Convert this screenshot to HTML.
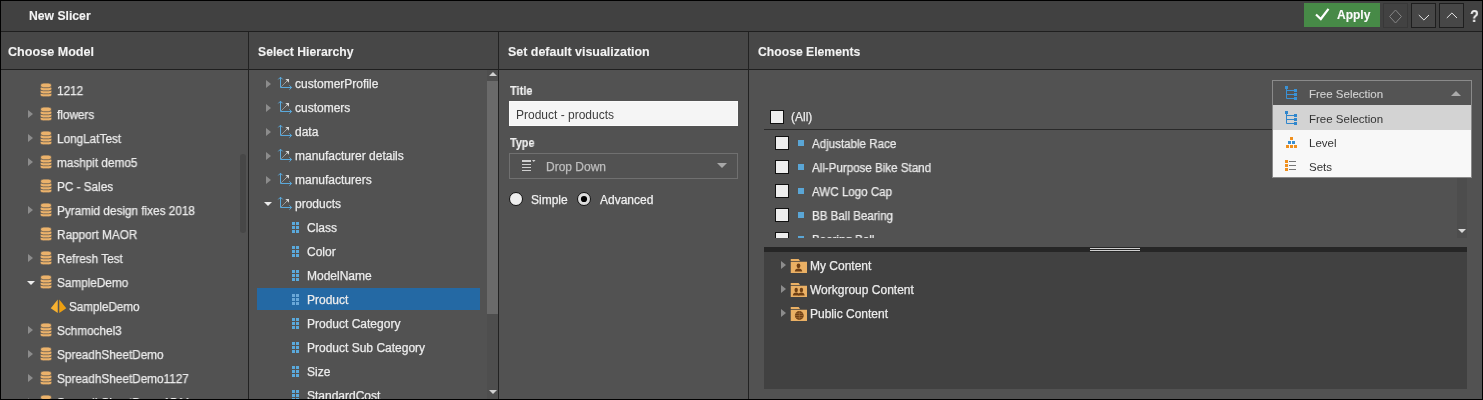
<!DOCTYPE html>
<html><head><meta charset="utf-8">
<style>
*{box-sizing:border-box;margin:0;padding:0}
html,body{width:1483px;height:400px;overflow:hidden;background:#000}
body{position:relative;font-family:"Liberation Sans",sans-serif;font-size:12px;color:#ececec}
.t{-webkit-text-stroke:0.25px currentColor}
.t.b,.t.h{-webkit-text-stroke:0.1px currentColor}
.a{position:absolute}
.t{will-change:transform;position:absolute;line-height:16px;white-space:nowrap;font-size:12px}
.b{font-weight:bold}
.h{font-weight:bold;font-size:12.2px;color:#f2f2f2}
.tri-r{position:absolute;width:0;height:0;border-top:4px solid transparent;border-bottom:4px solid transparent;border-left:5px solid #8c8c8c}
.tri-d{position:absolute;width:0;height:0;border-left:4px solid transparent;border-right:4px solid transparent;border-top:4.5px solid #ececec}
</style></head><body>
<!-- frame -->
<div class="a" style="left:1px;top:1px;width:1481px;height:30px;background:#414141"></div>
<div class="a" style="left:1px;top:31px;width:1481px;height:1px;background:#1f1f1f"></div>
<div class="a" style="left:1px;top:32px;width:1481px;height:37px;background:#474747"></div>
<div class="a" style="left:1px;top:69px;width:1481px;height:1px;background:#1f1f1f"></div>
<div class="a" style="left:1px;top:70px;width:1481px;height:329px;background:#525252"></div>
<div class="a" style="left:248px;top:32px;width:1px;height:367px;background:#222"></div>
<div class="a" style="left:498px;top:32px;width:1px;height:367px;background:#222"></div>
<div class="a" style="left:748px;top:32px;width:1px;height:367px;background:#222"></div>

<!-- title bar -->
<div class="t b" style="left:29px;top:8px;font-size:12.2px;color:#f2f2f2">New Slicer</div>

<!-- column headers -->
<div class="t h" style="left:8px;top:44px;font-size:12.6px">Choose Model</div>
<div class="t h" style="left:258px;top:44px">Select Hierarchy</div>
<div class="t h" style="left:508px;top:44px;font-size:12.45px">Set default visualization</div>
<div class="t h" style="left:758px;top:44px">Choose Elements</div>

<!-- header buttons -->
<div class="a" style="left:1304px;top:3px;width:76px;height:24px;background:#478a47"></div>
<svg class="a" style="left:1314px;top:6.5px" width="17" height="14" viewBox="0 0 17 14"><path d="M2 7.5L6.8 12L14.5 1.8" stroke="#fff" stroke-width="2.2" fill="none"/></svg>
<div class="t b" style="left:1337px;top:7px;color:#fafafa;font-size:12px">Apply</div>
<div class="a" style="left:1383px;top:3px;width:25px;height:25px;background:#424242;border:1px solid #383838"></div>
<svg class="a" style="left:1388px;top:9px" width="15" height="15" viewBox="0 0 15 15"><path d="M7.5 1L13.4 7.5L7.5 14L1.6 7.5Z" stroke="#858585" stroke-width="1" fill="none"/></svg>
<div class="a" style="left:1411px;top:3px;width:25px;height:25px;background:#474747;border:1px solid #1e1e1e"></div>
<svg class="a" style="left:1418px;top:14px" width="12" height="8" viewBox="0 0 12 8"><path d="M0.8 1L5.9 6L11 1" stroke="#e6e6e6" stroke-width="1" fill="none"/></svg>
<div class="a" style="left:1439px;top:3px;width:25px;height:25px;background:#474747;border:1px solid #1e1e1e"></div>
<svg class="a" style="left:1446px;top:12px" width="12" height="8" viewBox="0 0 12 8"><path d="M0.8 6L5.9 1L11 6" stroke="#e6e6e6" stroke-width="1" fill="none"/></svg>
<div class="t b" style="left:1470px;top:9px;color:#f0f0f0;font-size:16px;transform:scaleX(0.9);transform-origin:0 0">?</div>
<svg class="a" style="left:40px;top:83px" width="12" height="14" viewBox="0 0 12 14"><g fill="#ebb26b" stroke="#525252" stroke-width="0.7"><rect x="0.2" y="9.6" width="11.6" height="4.2" rx="3.2" ry="2"/><rect x="0.2" y="6.6" width="11.6" height="4.2" rx="3.2" ry="2"/><rect x="0.2" y="3.4" width="11.6" height="4.4" rx="3.2" ry="2"/><rect x="0.6" y="0.1" width="10.8" height="4.6" rx="3.2" ry="2"/></g></svg>
<div class="t" style="left:56.5px;top:83px;transform:scaleX(0.98);transform-origin:0 0">1212</div>
<div class="tri-r" style="left:28px;top:110px"></div>
<svg class="a" style="left:40px;top:107px" width="12" height="14" viewBox="0 0 12 14"><g fill="#ebb26b" stroke="#525252" stroke-width="0.7"><rect x="0.2" y="9.6" width="11.6" height="4.2" rx="3.2" ry="2"/><rect x="0.2" y="6.6" width="11.6" height="4.2" rx="3.2" ry="2"/><rect x="0.2" y="3.4" width="11.6" height="4.4" rx="3.2" ry="2"/><rect x="0.6" y="0.1" width="10.8" height="4.6" rx="3.2" ry="2"/></g></svg>
<div class="t" style="left:56.5px;top:107px;transform:scaleX(0.98);transform-origin:0 0">flowers</div>
<div class="tri-r" style="left:28px;top:134px"></div>
<svg class="a" style="left:40px;top:131px" width="12" height="14" viewBox="0 0 12 14"><g fill="#ebb26b" stroke="#525252" stroke-width="0.7"><rect x="0.2" y="9.6" width="11.6" height="4.2" rx="3.2" ry="2"/><rect x="0.2" y="6.6" width="11.6" height="4.2" rx="3.2" ry="2"/><rect x="0.2" y="3.4" width="11.6" height="4.4" rx="3.2" ry="2"/><rect x="0.6" y="0.1" width="10.8" height="4.6" rx="3.2" ry="2"/></g></svg>
<div class="t" style="left:56.5px;top:131px;transform:scaleX(0.98);transform-origin:0 0">LongLatTest</div>
<div class="tri-r" style="left:28px;top:158px"></div>
<svg class="a" style="left:40px;top:155px" width="12" height="14" viewBox="0 0 12 14"><g fill="#ebb26b" stroke="#525252" stroke-width="0.7"><rect x="0.2" y="9.6" width="11.6" height="4.2" rx="3.2" ry="2"/><rect x="0.2" y="6.6" width="11.6" height="4.2" rx="3.2" ry="2"/><rect x="0.2" y="3.4" width="11.6" height="4.4" rx="3.2" ry="2"/><rect x="0.6" y="0.1" width="10.8" height="4.6" rx="3.2" ry="2"/></g></svg>
<div class="t" style="left:56.5px;top:155px;transform:scaleX(0.98);transform-origin:0 0">mashpit demo5</div>
<svg class="a" style="left:40px;top:179px" width="12" height="14" viewBox="0 0 12 14"><g fill="#ebb26b" stroke="#525252" stroke-width="0.7"><rect x="0.2" y="9.6" width="11.6" height="4.2" rx="3.2" ry="2"/><rect x="0.2" y="6.6" width="11.6" height="4.2" rx="3.2" ry="2"/><rect x="0.2" y="3.4" width="11.6" height="4.4" rx="3.2" ry="2"/><rect x="0.6" y="0.1" width="10.8" height="4.6" rx="3.2" ry="2"/></g></svg>
<div class="t" style="left:56.5px;top:179px;transform:scaleX(0.98);transform-origin:0 0">PC - Sales</div>
<div class="tri-r" style="left:28px;top:206px"></div>
<svg class="a" style="left:40px;top:203px" width="12" height="14" viewBox="0 0 12 14"><g fill="#ebb26b" stroke="#525252" stroke-width="0.7"><rect x="0.2" y="9.6" width="11.6" height="4.2" rx="3.2" ry="2"/><rect x="0.2" y="6.6" width="11.6" height="4.2" rx="3.2" ry="2"/><rect x="0.2" y="3.4" width="11.6" height="4.4" rx="3.2" ry="2"/><rect x="0.6" y="0.1" width="10.8" height="4.6" rx="3.2" ry="2"/></g></svg>
<div class="t" style="left:56.5px;top:203px;transform:scaleX(0.98);transform-origin:0 0">Pyramid design fixes 2018</div>
<svg class="a" style="left:40px;top:227px" width="12" height="14" viewBox="0 0 12 14"><g fill="#ebb26b" stroke="#525252" stroke-width="0.7"><rect x="0.2" y="9.6" width="11.6" height="4.2" rx="3.2" ry="2"/><rect x="0.2" y="6.6" width="11.6" height="4.2" rx="3.2" ry="2"/><rect x="0.2" y="3.4" width="11.6" height="4.4" rx="3.2" ry="2"/><rect x="0.6" y="0.1" width="10.8" height="4.6" rx="3.2" ry="2"/></g></svg>
<div class="t" style="left:56.5px;top:227px;transform:scaleX(0.98);transform-origin:0 0">Rapport MAOR</div>
<div class="tri-r" style="left:28px;top:254px"></div>
<svg class="a" style="left:40px;top:251px" width="12" height="14" viewBox="0 0 12 14"><g fill="#ebb26b" stroke="#525252" stroke-width="0.7"><rect x="0.2" y="9.6" width="11.6" height="4.2" rx="3.2" ry="2"/><rect x="0.2" y="6.6" width="11.6" height="4.2" rx="3.2" ry="2"/><rect x="0.2" y="3.4" width="11.6" height="4.4" rx="3.2" ry="2"/><rect x="0.6" y="0.1" width="10.8" height="4.6" rx="3.2" ry="2"/></g></svg>
<div class="t" style="left:56.5px;top:251px;transform:scaleX(0.98);transform-origin:0 0">Refresh Test</div>
<div class="tri-d" style="left:26.5px;top:280.5px"></div>
<svg class="a" style="left:40px;top:275px" width="12" height="14" viewBox="0 0 12 14"><g fill="#ebb26b" stroke="#525252" stroke-width="0.7"><rect x="0.2" y="9.6" width="11.6" height="4.2" rx="3.2" ry="2"/><rect x="0.2" y="6.6" width="11.6" height="4.2" rx="3.2" ry="2"/><rect x="0.2" y="3.4" width="11.6" height="4.4" rx="3.2" ry="2"/><rect x="0.6" y="0.1" width="10.8" height="4.6" rx="3.2" ry="2"/></g></svg>
<div class="t" style="left:56.5px;top:275px;transform:scaleX(0.98);transform-origin:0 0">SampleDemo</div>
<svg class="a" style="left:50px;top:299px" width="17" height="15" viewBox="0 0 17 15"><path d="M7.75 0.5L0.75 9.25L7.75 14Z" fill="#f7b130"/><path d="M9.25 0.5L16.25 9.25L9.25 14Z" fill="#eda012"/></svg>
<div class="t" style="left:69px;top:299px;transform:scaleX(0.97);transform-origin:0 0">SampleDemo</div>
<div class="tri-r" style="left:28px;top:326px"></div>
<svg class="a" style="left:40px;top:323px" width="12" height="14" viewBox="0 0 12 14"><g fill="#ebb26b" stroke="#525252" stroke-width="0.7"><rect x="0.2" y="9.6" width="11.6" height="4.2" rx="3.2" ry="2"/><rect x="0.2" y="6.6" width="11.6" height="4.2" rx="3.2" ry="2"/><rect x="0.2" y="3.4" width="11.6" height="4.4" rx="3.2" ry="2"/><rect x="0.6" y="0.1" width="10.8" height="4.6" rx="3.2" ry="2"/></g></svg>
<div class="t" style="left:56.5px;top:323px;transform:scaleX(0.98);transform-origin:0 0">Schmochel3</div>
<div class="tri-r" style="left:28px;top:350px"></div>
<svg class="a" style="left:40px;top:347px" width="12" height="14" viewBox="0 0 12 14"><g fill="#ebb26b" stroke="#525252" stroke-width="0.7"><rect x="0.2" y="9.6" width="11.6" height="4.2" rx="3.2" ry="2"/><rect x="0.2" y="6.6" width="11.6" height="4.2" rx="3.2" ry="2"/><rect x="0.2" y="3.4" width="11.6" height="4.4" rx="3.2" ry="2"/><rect x="0.6" y="0.1" width="10.8" height="4.6" rx="3.2" ry="2"/></g></svg>
<div class="t" style="left:56.5px;top:347px;transform:scaleX(0.98);transform-origin:0 0">SpreadhSheetDemo</div>
<div class="tri-r" style="left:28px;top:374px"></div>
<svg class="a" style="left:40px;top:371px" width="12" height="14" viewBox="0 0 12 14"><g fill="#ebb26b" stroke="#525252" stroke-width="0.7"><rect x="0.2" y="9.6" width="11.6" height="4.2" rx="3.2" ry="2"/><rect x="0.2" y="6.6" width="11.6" height="4.2" rx="3.2" ry="2"/><rect x="0.2" y="3.4" width="11.6" height="4.4" rx="3.2" ry="2"/><rect x="0.6" y="0.1" width="10.8" height="4.6" rx="3.2" ry="2"/></g></svg>
<div class="t" style="left:56.5px;top:371px;transform:scaleX(0.98);transform-origin:0 0">SpreadhSheetDemo1127</div>
<div class="tri-r" style="left:28px;top:398px"></div>
<svg class="a" style="left:40px;top:395px" width="12" height="14" viewBox="0 0 12 14"><g fill="#ebb26b" stroke="#525252" stroke-width="0.7"><rect x="0.2" y="9.6" width="11.6" height="4.2" rx="3.2" ry="2"/><rect x="0.2" y="6.6" width="11.6" height="4.2" rx="3.2" ry="2"/><rect x="0.2" y="3.4" width="11.6" height="4.4" rx="3.2" ry="2"/><rect x="0.6" y="0.1" width="10.8" height="4.6" rx="3.2" ry="2"/></g></svg>
<div class="t" style="left:56.5px;top:395px;transform:scaleX(0.98);transform-origin:0 0">SpreadhSheetDemo1544</div>
<div class="tri-r" style="left:266px;top:79.5px"></div>
<svg class="a" style="left:277px;top:76px" width="16" height="15" viewBox="0 0 16 15"><path d="M3.5 1.2V11.5H14.6" stroke="#5aa9dc" stroke-width="1" fill="none"/><path d="M1.3 3.4L3.5 1.2L5.7 3.4M12.4 9.3L14.6 11.5L12.4 13.7" stroke="#5aa9dc" stroke-width="1" fill="none"/><path d="M4.6 10.4L10.8 4.2" stroke="#d0d0d0" stroke-width="1" stroke-dasharray="1 0.6" fill="none"/><path d="M8.3 3H12V6.7Z" fill="#d8d8d8"/></svg>
<div class="t" style="left:295px;top:76px">customerProfile</div>
<div class="tri-r" style="left:266px;top:103.5px"></div>
<svg class="a" style="left:277px;top:100px" width="16" height="15" viewBox="0 0 16 15"><path d="M3.5 1.2V11.5H14.6" stroke="#5aa9dc" stroke-width="1" fill="none"/><path d="M1.3 3.4L3.5 1.2L5.7 3.4M12.4 9.3L14.6 11.5L12.4 13.7" stroke="#5aa9dc" stroke-width="1" fill="none"/><path d="M4.6 10.4L10.8 4.2" stroke="#d0d0d0" stroke-width="1" stroke-dasharray="1 0.6" fill="none"/><path d="M8.3 3H12V6.7Z" fill="#d8d8d8"/></svg>
<div class="t" style="left:295px;top:100px">customers</div>
<div class="tri-r" style="left:266px;top:127.5px"></div>
<svg class="a" style="left:277px;top:124px" width="16" height="15" viewBox="0 0 16 15"><path d="M3.5 1.2V11.5H14.6" stroke="#5aa9dc" stroke-width="1" fill="none"/><path d="M1.3 3.4L3.5 1.2L5.7 3.4M12.4 9.3L14.6 11.5L12.4 13.7" stroke="#5aa9dc" stroke-width="1" fill="none"/><path d="M4.6 10.4L10.8 4.2" stroke="#d0d0d0" stroke-width="1" stroke-dasharray="1 0.6" fill="none"/><path d="M8.3 3H12V6.7Z" fill="#d8d8d8"/></svg>
<div class="t" style="left:295px;top:124px">data</div>
<div class="tri-r" style="left:266px;top:151.5px"></div>
<svg class="a" style="left:277px;top:148px" width="16" height="15" viewBox="0 0 16 15"><path d="M3.5 1.2V11.5H14.6" stroke="#5aa9dc" stroke-width="1" fill="none"/><path d="M1.3 3.4L3.5 1.2L5.7 3.4M12.4 9.3L14.6 11.5L12.4 13.7" stroke="#5aa9dc" stroke-width="1" fill="none"/><path d="M4.6 10.4L10.8 4.2" stroke="#d0d0d0" stroke-width="1" stroke-dasharray="1 0.6" fill="none"/><path d="M8.3 3H12V6.7Z" fill="#d8d8d8"/></svg>
<div class="t" style="left:295px;top:148px">manufacturer details</div>
<div class="tri-r" style="left:266px;top:175.5px"></div>
<svg class="a" style="left:277px;top:172px" width="16" height="15" viewBox="0 0 16 15"><path d="M3.5 1.2V11.5H14.6" stroke="#5aa9dc" stroke-width="1" fill="none"/><path d="M1.3 3.4L3.5 1.2L5.7 3.4M12.4 9.3L14.6 11.5L12.4 13.7" stroke="#5aa9dc" stroke-width="1" fill="none"/><path d="M4.6 10.4L10.8 4.2" stroke="#d0d0d0" stroke-width="1" stroke-dasharray="1 0.6" fill="none"/><path d="M8.3 3H12V6.7Z" fill="#d8d8d8"/></svg>
<div class="t" style="left:295px;top:172px">manufacturers</div>
<div class="tri-d" style="left:264px;top:201.5px"></div>
<svg class="a" style="left:277px;top:196px" width="16" height="15" viewBox="0 0 16 15"><path d="M3.5 1.2V11.5H14.6" stroke="#5aa9dc" stroke-width="1" fill="none"/><path d="M1.3 3.4L3.5 1.2L5.7 3.4M12.4 9.3L14.6 11.5L12.4 13.7" stroke="#5aa9dc" stroke-width="1" fill="none"/><path d="M4.6 10.4L10.8 4.2" stroke="#d0d0d0" stroke-width="1" stroke-dasharray="1 0.6" fill="none"/><path d="M8.3 3H12V6.7Z" fill="#d8d8d8"/></svg>
<div class="t" style="left:295px;top:196px">products</div>
<svg class="a" style="left:292px;top:222px" width="8" height="11" viewBox="0 0 8 11"><g fill="#5aa9dc"><rect x="0" y="0" width="3" height="3"/><rect x="4" y="0" width="3" height="3"/><rect x="0" y="4" width="3" height="3"/><rect x="4" y="4" width="3" height="3"/><rect x="0" y="8" width="3" height="3"/><rect x="4" y="8" width="3" height="3"/></g></svg>
<div class="t" style="left:306.5px;top:220px">Class</div>
<svg class="a" style="left:292px;top:246px" width="8" height="11" viewBox="0 0 8 11"><g fill="#5aa9dc"><rect x="0" y="0" width="3" height="3"/><rect x="4" y="0" width="3" height="3"/><rect x="0" y="4" width="3" height="3"/><rect x="4" y="4" width="3" height="3"/><rect x="0" y="8" width="3" height="3"/><rect x="4" y="8" width="3" height="3"/></g></svg>
<div class="t" style="left:306.5px;top:244px">Color</div>
<svg class="a" style="left:292px;top:270px" width="8" height="11" viewBox="0 0 8 11"><g fill="#5aa9dc"><rect x="0" y="0" width="3" height="3"/><rect x="4" y="0" width="3" height="3"/><rect x="0" y="4" width="3" height="3"/><rect x="4" y="4" width="3" height="3"/><rect x="0" y="8" width="3" height="3"/><rect x="4" y="8" width="3" height="3"/></g></svg>
<div class="t" style="left:306.5px;top:268px">ModelName</div>
<div class="a" style="left:257px;top:288px;width:223px;height:22px;background:#2469a4"></div>
<svg class="a" style="left:292px;top:294px" width="8" height="11" viewBox="0 0 8 11"><g fill="#6aa8d8"><rect x="0" y="0" width="3" height="3"/><rect x="4" y="0" width="3" height="3"/><rect x="0" y="4" width="3" height="3"/><rect x="4" y="4" width="3" height="3"/><rect x="0" y="8" width="3" height="3"/><rect x="4" y="8" width="3" height="3"/></g></svg>
<div class="t" style="left:306.5px;top:292px">Product</div>
<svg class="a" style="left:292px;top:318px" width="8" height="11" viewBox="0 0 8 11"><g fill="#5aa9dc"><rect x="0" y="0" width="3" height="3"/><rect x="4" y="0" width="3" height="3"/><rect x="0" y="4" width="3" height="3"/><rect x="4" y="4" width="3" height="3"/><rect x="0" y="8" width="3" height="3"/><rect x="4" y="8" width="3" height="3"/></g></svg>
<div class="t" style="left:306.5px;top:316px">Product Category</div>
<svg class="a" style="left:292px;top:342px" width="8" height="11" viewBox="0 0 8 11"><g fill="#5aa9dc"><rect x="0" y="0" width="3" height="3"/><rect x="4" y="0" width="3" height="3"/><rect x="0" y="4" width="3" height="3"/><rect x="4" y="4" width="3" height="3"/><rect x="0" y="8" width="3" height="3"/><rect x="4" y="8" width="3" height="3"/></g></svg>
<div class="t" style="left:306.5px;top:340px">Product Sub Category</div>
<svg class="a" style="left:292px;top:366px" width="8" height="11" viewBox="0 0 8 11"><g fill="#5aa9dc"><rect x="0" y="0" width="3" height="3"/><rect x="4" y="0" width="3" height="3"/><rect x="0" y="4" width="3" height="3"/><rect x="4" y="4" width="3" height="3"/><rect x="0" y="8" width="3" height="3"/><rect x="4" y="8" width="3" height="3"/></g></svg>
<div class="t" style="left:306.5px;top:364px">Size</div>
<svg class="a" style="left:292px;top:390px" width="8" height="11" viewBox="0 0 8 11"><g fill="#5aa9dc"><rect x="0" y="0" width="3" height="3"/><rect x="4" y="0" width="3" height="3"/><rect x="0" y="4" width="3" height="3"/><rect x="4" y="4" width="3" height="3"/><rect x="0" y="8" width="3" height="3"/><rect x="4" y="8" width="3" height="3"/></g></svg>
<div class="t" style="left:306.5px;top:388px">StandardCost</div>
<!-- col2 scrollbar -->
<div class="a" style="left:487px;top:70px;width:11px;height:329px;background:#4e4e4e"></div>
<div class="a" style="left:487px;top:81px;width:11px;height:233px;background:#6a6a6a"></div>
<div class="a" style="left:489px;top:72px;width:0;height:0;border-left:4px solid transparent;border-right:4px solid transparent;border-bottom:4px solid #d0d0d0"></div>
<div class="a" style="left:489px;top:390px;width:0;height:0;border-left:4px solid transparent;border-right:4px solid transparent;border-top:4px solid #d0d0d0"></div>
<!-- col1 scrollbar thumb -->
<div class="a" style="left:240px;top:154px;width:6px;height:79px;border-radius:3px;background:#474747"></div>

<!-- col3 -->
<div class="t b" style="left:510px;top:83px;color:#f0f0f0;transform:scaleX(0.92);transform-origin:0 0">Title</div>
<div class="a" style="left:509px;top:101px;width:229px;height:25px;background:#f5f5f5;border:1px solid #fafafa"></div>
<div class="t" style="left:516px;top:107px;color:#3c3c3c;-webkit-text-stroke:0">Product - products</div>
<div class="t b" style="left:510px;top:135px;color:#f0f0f0;transform:scaleX(0.9);transform-origin:0 0">Type</div>
<div class="a" style="left:509px;top:153px;width:229px;height:26px;border:1px solid #707070"></div>
<svg class="a" style="left:522px;top:159px" width="14" height="13" viewBox="0 0 14 13"><g fill="#d0d0d0"><rect x="0" y="1" width="9" height="2"/><rect x="0" y="5" width="9" height="1"/><rect x="0" y="8" width="9" height="1"/><rect x="0" y="11" width="9" height="1"/><path d="M10 1H13.5L11.75 3Z"/></g></svg>
<div class="t" style="left:546px;top:159px;color:#bdbdbd">Drop Down</div>
<div class="a" style="left:717px;top:163px;width:0;height:0;border-left:5px solid transparent;border-right:5px solid transparent;border-top:5px solid #a8a8a8"></div>
<svg class="a" style="left:508px;top:191px" width="16" height="16" viewBox="0 0 16 16"><circle cx="8" cy="8" r="6.5" fill="#eeeeee" stroke="#111" stroke-width="1"/></svg>
<div class="t" style="left:531px;top:192px;color:#f0f0f0">Simple</div>
<svg class="a" style="left:576px;top:191px" width="16" height="16" viewBox="0 0 16 16"><circle cx="8" cy="8" r="6.5" fill="#dddddd" stroke="#111" stroke-width="1"/><circle cx="8" cy="8" r="3.1" fill="#000"/></svg>
<div class="t" style="left:600px;top:192px;color:#f0f0f0">Advanced</div>

<!-- col4 list -->
<div class="a" style="left:770px;top:110px;width:14px;height:14px;background:#eeeeee;border:1px solid #111"></div>
<div class="t" style="left:791px;top:109px;color:#ececec">(All)</div>
<div class="a" style="left:764px;top:129px;width:703px;height:1px;background:#2a2a2a"></div>
<div class="a" style="left:764px;top:130px;width:703px;height:108px;overflow:hidden">
<div class="a" style="left:11px;top:6px;width:14px;height:14px;background:#eeeeee;border:1px solid #111"></div>
<div class="a" style="left:34px;top:10px;width:6px;height:6px;background:#5aa6d6"></div>
<div class="t" style="left:48px;top:6px;transform:scaleX(0.965);transform-origin:0 0">Adjustable Race</div>
<div class="a" style="left:11px;top:30px;width:14px;height:14px;background:#eeeeee;border:1px solid #111"></div>
<div class="a" style="left:34px;top:34px;width:6px;height:6px;background:#5aa6d6"></div>
<div class="t" style="left:48px;top:30px;transform:scaleX(0.965);transform-origin:0 0">All-Purpose Bike Stand</div>
<div class="a" style="left:11px;top:54px;width:14px;height:14px;background:#eeeeee;border:1px solid #111"></div>
<div class="a" style="left:34px;top:58px;width:6px;height:6px;background:#5aa6d6"></div>
<div class="t" style="left:48px;top:54px;transform:scaleX(0.965);transform-origin:0 0">AWC Logo Cap</div>
<div class="a" style="left:11px;top:78px;width:14px;height:14px;background:#eeeeee;border:1px solid #111"></div>
<div class="a" style="left:34px;top:82px;width:6px;height:6px;background:#5aa6d6"></div>
<div class="t" style="left:48px;top:78px;transform:scaleX(0.965);transform-origin:0 0">BB Ball Bearing</div>
<div class="a" style="left:11px;top:102px;width:14px;height:14px;background:#eeeeee;border:1px solid #111"></div>
<div class="a" style="left:34px;top:106px;width:6px;height:6px;background:#5aa6d6"></div>
<div class="t" style="left:48px;top:102px;transform:scaleX(0.965);transform-origin:0 0">Bearing Ball</div>
</div>
<div class="a" style="left:1457px;top:130px;width:10px;height:108px;background:#4d4d4d"></div>
<div class="a" style="left:1458px;top:229px;width:0;height:0;border-left:4px solid transparent;border-right:4px solid transparent;border-top:4px solid #d8d8d8"></div>
<!-- dropdown -->
<div class="a" style="left:1272px;top:80px;width:200px;height:98px;background:#f8f8f8;border:1px solid #8a8a8a;border-top-color:#8a8a8a"></div>
<div class="a" style="left:1273px;top:81px;width:198px;height:24px;background:#545454"></div>
<div class="a" style="left:1273px;top:105px;width:198px;height:25px;background:#d3d3d3"></div>
<svg class="a" style="left:1285px;top:86px" width="13" height="15" viewBox="0 0 13 15"><g fill="#3a92d6"><rect x="0" y="0" width="3" height="3"/><rect x="9" y="3" width="3" height="3"/><rect x="9" y="7" width="3" height="3"/><rect x="9" y="11" width="3" height="3"/></g><path d="M1.5 3V12.5H9M1.5 4.5H9M1.5 8.5H9" stroke="#3a92d6" stroke-width="1" fill="none"/></svg>
<svg class="a" style="left:1285px;top:111px" width="13" height="15" viewBox="0 0 13 15"><g fill="#2f86cc"><rect x="0" y="0" width="3" height="3"/><rect x="9" y="3" width="3" height="3"/><rect x="9" y="7" width="3" height="3"/><rect x="9" y="11" width="3" height="3"/></g><path d="M1.5 3V12.5H9M1.5 4.5H9M1.5 8.5H9" stroke="#2f86cc" stroke-width="1" fill="none"/></svg>
<div class="t" style="left:1309px;top:86px;color:#d2d2d2;font-size:11.5px;-webkit-text-stroke:0.1px currentColor">Free Selection</div>
<div class="t" style="left:1309px;top:111px;color:#333;font-size:11.5px;-webkit-text-stroke:0">Free Selection</div>
<div class="t" style="left:1309px;top:135px;color:#333;font-size:11.5px;-webkit-text-stroke:0">Level</div>
<div class="t" style="left:1309px;top:159px;color:#333;font-size:11.5px;-webkit-text-stroke:0">Sets</div>
<div class="a" style="left:1451px;top:91px;width:0;height:0;border-left:5px solid transparent;border-right:5px solid transparent;border-bottom:5px solid #aaaaaa"></div>
<svg class="a" style="left:1285px;top:135px" width="13" height="14" viewBox="0 0 13 14"><rect x="5" y="2" width="3" height="3" fill="#f0901e"/><rect x="3" y="6" width="3" height="3" fill="#3a8fd0"/><rect x="7" y="6" width="3" height="3" fill="#3a8fd0"/><rect x="1" y="10" width="3" height="3" fill="#f0901e"/><rect x="5" y="10" width="3" height="3" fill="#f0901e"/><rect x="9" y="10" width="3" height="3" fill="#f0901e"/></svg>
<svg class="a" style="left:1285px;top:160px" width="13" height="12" viewBox="0 0 13 12"><g fill="#f0901e"><rect x="0" y="0" width="3" height="3"/><rect x="0" y="4" width="3" height="3"/><rect x="0" y="8" width="3" height="3"/></g><g fill="#777"><rect x="4" y="1" width="7" height="1"/><rect x="4" y="5" width="7" height="1"/><rect x="4" y="9" width="7" height="1"/></g></svg>
<!-- splitter + content tree -->
<div class="a" style="left:764px;top:247px;width:703px;height:5px;background:#262626"></div>
<div class="a" style="left:1090px;top:248px;width:50px;height:1px;background:#cfcfcf"></div>
<div class="a" style="left:1090px;top:250px;width:50px;height:1px;background:#cfcfcf"></div>
<div class="a" style="left:764px;top:252px;width:703px;height:137px;background:#414141"></div>
<div class="tri-r" style="left:781px;top:261px"></div>
<svg class="a" style="left:790px;top:257px" width="18" height="17" viewBox="0 0 18 17"><path d="M0.75 2H8.6L10 4H0.75Z" fill="#eab064"/><rect x="0.75" y="4.75" width="16.25" height="11.25" fill="#eab064"/><g fill="#6e3f14"><ellipse cx="8.5" cy="8.8" rx="1.9" ry="2.4"/><path d="M4.8 14.6Q5 11.8 8.5 11.6Q12 11.8 12.2 14.6Z"/></g></svg>
<div class="t" style="left:810px;top:258px">My Content</div>
<div class="tri-r" style="left:781px;top:285px"></div>
<svg class="a" style="left:790px;top:281px" width="18" height="17" viewBox="0 0 18 17"><path d="M0.75 2H8.6L10 4H0.75Z" fill="#eab064"/><rect x="0.75" y="4.75" width="16.25" height="11.25" fill="#eab064"/><g fill="#6e3f14"><ellipse cx="6.2" cy="9" rx="1.7" ry="2.3"/><ellipse cx="11.4" cy="9" rx="1.7" ry="2.3"/><path d="M2.8 14.6Q3 11.8 6.2 11.6Q9.2 11.8 9.4 14.6Z"/><path d="M8.2 14.6Q8.4 11.8 11.4 11.6Q14.4 11.8 14.6 14.6Z"/></g></svg>
<div class="t" style="left:810px;top:282px">Workgroup Content</div>
<div class="tri-r" style="left:781px;top:309px"></div>
<svg class="a" style="left:790px;top:305px" width="18" height="17" viewBox="0 0 18 17"><path d="M0.75 2H8.6L10 4H0.75Z" fill="#eab064"/><rect x="0.75" y="4.75" width="16.25" height="11.25" fill="#eab064"/><circle cx="9.3" cy="10.5" r="4.4" fill="#6e3f14"/><path d="M5 10.5H13.6M9.3 6.1V14.9M6 8.3H12.6M6 12.7H12.6" stroke="#b07a40" stroke-width="0.6" fill="none"/></svg>
<div class="t" style="left:810px;top:306px">Public Content</div>

<div class="a" style="left:0;top:399px;width:1483px;height:1px;background:#000;z-index:9"></div>
<div class="a" style="left:1482px;top:0;width:1px;height:400px;background:#000;z-index:9"></div>
<div class="a" style="left:0;top:0;width:1px;height:400px;background:#000;z-index:9"></div>
<div class="a" style="left:0;top:0;width:1483px;height:1px;background:#000;z-index:9"></div>
</body></html>
